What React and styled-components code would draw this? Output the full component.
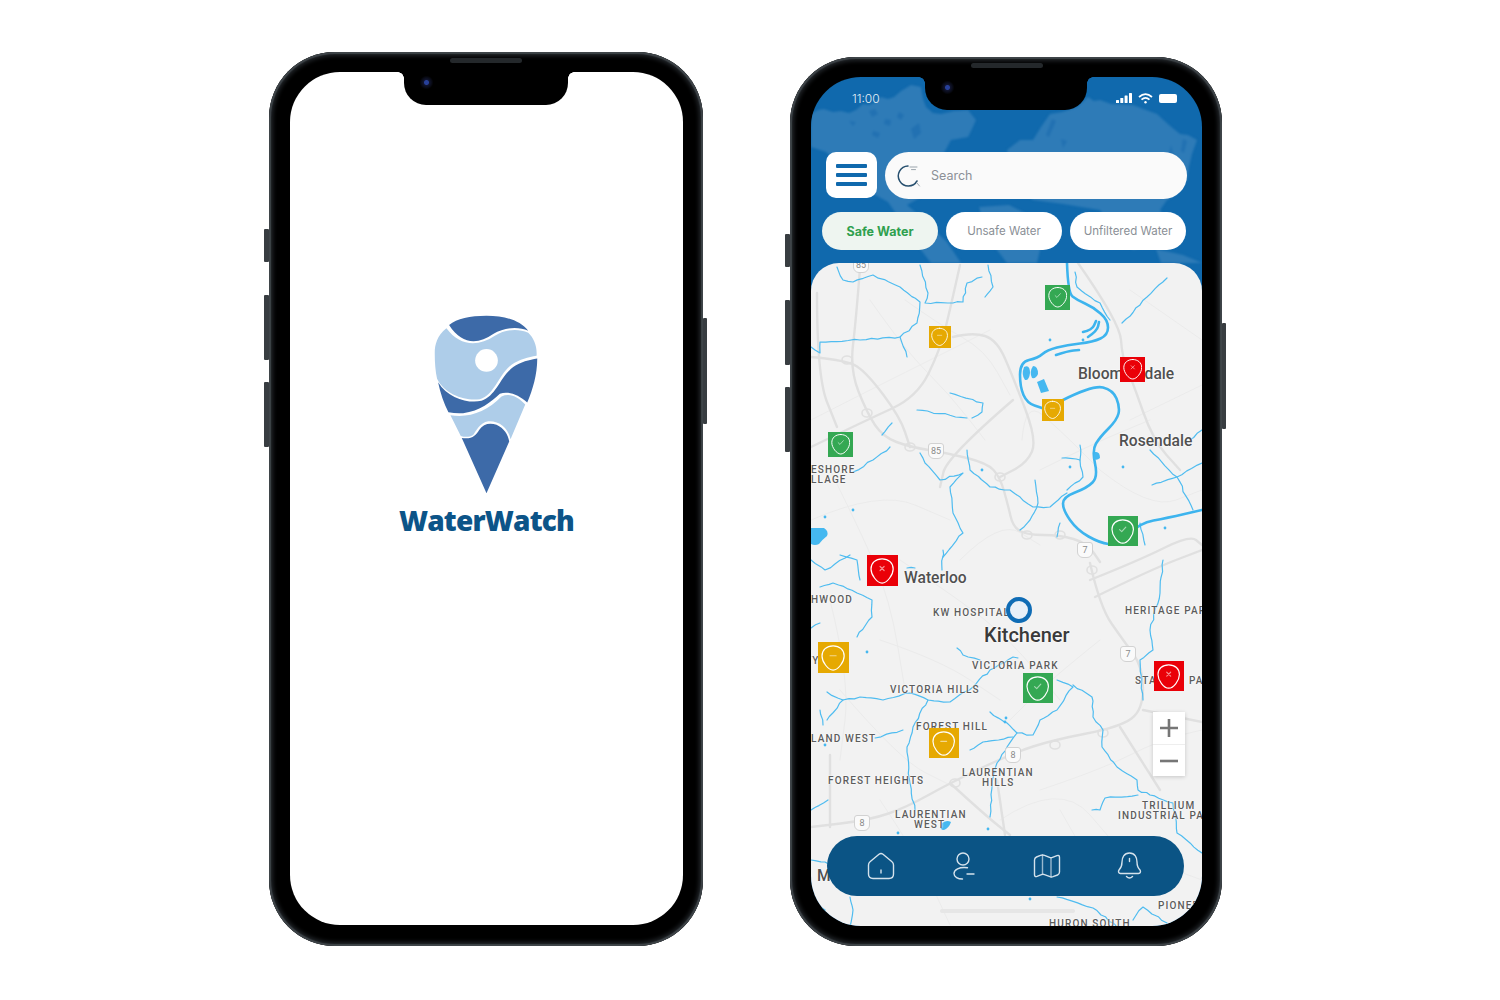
import React from 'react'
import styled, { createGlobalStyle } from 'styled-components'

const GlobalStyle = createGlobalStyle`
  html, body { margin: 0; padding: 0; background: #fff; }
  body { font-family: "Inter", "Liberation Sans", sans-serif; }
  * { box-sizing: border-box; }
`

// map data is in page pixels, the svg viewBox below maps it on to the panel
const MAP_X = 811
const MAP_Y = 263

const minorRoads = [
  '811,420 860,395 920,365 990,330',
  '870,300 905,350 950,395 985,440',
  '905,300 940,325 985,350 1010,395',
  '1022,440 1025,400 1060,430 1100,470',
  '1130,290 1202,340',
  '1130,420 1202,385',
  '1040,470 1090,445 1150,420',
  '1100,470 1150,510 1202,490',
  '830,470 860,530 890,600 905,690',
  '811,520 880,490 950,520',
  '900,560 960,600 1010,640 1060,700',
  '960,560 1000,520 1040,545',
  '880,640 940,660 1000,700',
  '830,600 850,680 840,760',
  '1100,640 1050,680 1010,720',
  '1040,790 1100,770 1160,740 1202,730',
  '1000,820 1060,780 1120,850',
  '1060,810 1100,880',
  '880,800 920,860 950,925',
  '1120,850 1202,880',
  '840,690 900,760 950,785',
]

const mainRoads = [
  '860,268 856,320 850,370 867,413 883,437 910,447 947,453 987,463 1000,477 1008,505 1013,527 1027,535 1060,535 1087,543 1100,562',
  '960,265 950,310 940,350 917,397 867,420 811,447',
  '811,357 847,360 867,373 900,417 910,447',
  '953,337 973,332 997,340 1013,377 1037,440 1027,463 1000,477',
  '1013,400 947,457 940,487',
  '1078,263 1120,323 1122,357 1133,383 1153,440 1180,470',
  '817,293 817,377 837,427',
  '1090,563 1100,607 1123,640 1143,667 1143,710 1120,727 1053,740 1013,753 950,783 907,807 870,820 811,827',
  '1090,580 1140,560 1190,535 1202,545',
  '1095,597 1150,570 1202,550',
  '950,783 985,815 1010,835',
  '997,780 1005,835',
  '1143,710 1202,722',
  '830,755 830,827',
  '1120,727 1160,790',
]

const interchanges = [
  [847, 360], [910, 447], [1000, 477], [1027, 535], [1060, 535],
  [1055, 745], [955, 783], [1103, 733], [1092, 570], [867, 413],
]

const thinRivers = [
  '837,267 843,280 853,282 873,275 900,287 920,302 917,323 900,337 860,340 820,342 820,353 811,347',
  '920,265 928,293 925,303 953,303 963,302 967,283 982,277',
  '988,265 993,287 985,297',
  '900,337 907,357',
  '950,393 983,403 982,412 972,418',
  '917,410 967,418',
  '1167,278 1147,297 1122,323',
  '1075,272 1077,287 1100,303 1110,320',
  '967,450 970,470 990,487 1010,490 1033,507 1050,507 1067,493',
  '920,453 925,463 940,480 963,473 950,487 953,513 963,533 943,557',
  '853,472 873,460 890,447',
  '882,435 892,423',
  '1150,450 1177,477 1193,510',
  '1152,485 1177,477 1202,463',
  '1062,458 1080,460 1083,477 1067,490',
  '1080,445 1080,460',
  '1035,480 1038,503 1030,520 1020,530',
  '1060,523 1057,537',
  '1140,523 1145,545',
  '820,587 833,583 857,593 872,600 872,617 857,637',
  '811,628 820,623',
  '827,692 843,700 860,697 883,700 910,693 928,700 950,702 973,687 990,670 1013,657 1018,658',
  '843,700 827,720',
  '928,700 913,727 907,747 910,783 915,810',
  '957,648 963,655 980,660',
  '990,712 1007,723 1017,733 1033,735 1040,720 1057,710 1073,687 1057,680',
  '1073,685 1092,697 1093,717 1103,730 1102,747 1117,767 1137,780 1138,790 1150,795 1173,803 1177,833 1202,853',
  '875,738 903,730',
  '1017,733 1007,747 997,763 992,783 990,817',
  '1013,737 983,742 970,750',
  '1163,560 1160,593 1150,630 1153,650 1140,660 1143,700',
  '1092,810 1100,810 1105,798 1138,795',
  '850,897 853,910 850,927',
  '1057,897 1093,908 1117,927',
  '1133,920 1143,907 1167,923',
  '811,810 828,800',
  '811,860 825,862 840,870',
  '811,900 825,910 818,925',
  '943,550 942,570',
  '907,568 915,568',
  '840,555 857,560 860,580',
  '811,560 825,570 850,555',
  '1190,440 1202,430',
  '820,710 823,725',
]

const mainRivers = [
  '1067,263 1068,293 1077,300 1093,307 1108,320 1108,335 1093,342 1067,345 1047,350 1038,358 1020,362 1020,387 1027,403 1042,408',
  '1063,400 1093,385 1113,390 1120,407 1117,420 1100,437 1092,450 1098,477 1087,488 1063,497 1063,510 1077,530 1100,543 1117,545 1140,523 1167,518 1202,510',
  '1056,355 1068,351 1079,350',
  '1083,332 1092,330 1096,321',
  '1088,337 1097,331 1099,322',
]

const ponds = [
  'M1024 367 q6 -3 6 6 q-1 8 -5 7 q-4 -5 -1 -13z',
  'M1033 366 q5 0 5 8 q-2 5 -6 4 q-3 -6 1 -12z',
  'M1037 382 l7 -3 l5 12 l-8 2z',
  'M811 528 h13 q5 3 3 8 q-4 3 -8 8 q-4 2 -8 0z',
  'M941 824 q5 -5 10 -2 q-2 6 -7 8 q-5 0 -3 -6z',
  'M1095 452 q5 -1 5 6 q-3 3 -7 1z',
]

const waterDots = [
  [853, 510], [825, 517], [982, 470], [1070, 467], [1165, 528], [1123, 467],
  [867, 652], [1005, 722], [988, 829], [898, 833], [825, 745], [1030, 899],
  [1006, 718], [1083, 340], [1050, 340],
]

const shields = [
  { id: 'a', x: 861, y: 265, text: '85' },
  { id: 'b', x: 936, y: 451, text: '85' },
  { id: 'c', x: 1085, y: 550, text: '7' },
  { id: 'd', x: 1128, y: 654, text: '7' },
  { id: 'e', x: 1013, y: 755, text: '8' },
  { id: 'f', x: 862, y: 823, text: '8' },
]

const labels = [
  { text: 'ESHORE', x: 811, y: 469 },
  { text: 'LLAGE', x: 811, y: 479 },
  { text: 'Bloomingdale', x: 1078, y: 374, kind: 'town' },
  { text: 'Rosendale', x: 1119, y: 441, kind: 'town' },
  { text: 'Waterloo', x: 904, y: 578, kind: 'town' },
  { text: 'HWOOD', x: 811, y: 599 },
  { text: 'KW HOSPITAL', x: 933, y: 612 },
  { text: 'Kitchener', x: 984, y: 635, kind: 'city' },
  { text: 'HERITAGE PARK', x: 1125, y: 610 },
  { text: 'VICTORIA PARK', x: 972, y: 665 },
  { text: 'VICTORIA HILLS', x: 890, y: 689 },
  { text: 'STA', x: 1135, y: 680 },
  { text: 'PA', x: 1189, y: 680 },
  { text: 'TY', x: 805, y: 660 },
  { text: 'FOREST HILL', x: 916, y: 726 },
  { text: 'LAND WEST', x: 811, y: 738 },
  { text: 'FOREST HEIGHTS', x: 828, y: 780 },
  { text: 'LAURENTIAN', x: 962, y: 772 },
  { text: 'HILLS', x: 982, y: 782 },
  { text: 'LAURENTIAN', x: 895, y: 814 },
  { text: 'WEST', x: 914, y: 824 },
  { text: 'TRILLIUM', x: 1142, y: 805 },
  { text: 'INDUSTRIAL PARK', x: 1118, y: 815 },
  { text: 'M', x: 817, y: 876, kind: 'town' },
  { text: 'PIONEER', x: 1158, y: 905 },
  { text: 'HURON SOUTH', x: 1049, y: 923 },
]

const markers = [
  { id: 1, x: 1045, y: 285, size: 25, tone: 'safe' },
  { id: 2, x: 929, y: 326, size: 22, tone: 'unfiltered' },
  { id: 3, x: 1120, y: 357, size: 25, tone: 'unsafe' },
  { id: 4, x: 1042, y: 399, size: 22, tone: 'unfiltered' },
  { id: 5, x: 828, y: 432, size: 25, tone: 'safe' },
  { id: 6, x: 1108, y: 516, size: 30, tone: 'safe' },
  { id: 7, x: 867, y: 555, size: 31, tone: 'unsafe' },
  { id: 8, x: 818, y: 642, size: 31, tone: 'unfiltered' },
  { id: 9, x: 1023, y: 673, size: 30, tone: 'safe' },
  { id: 10, x: 929, y: 728, size: 30, tone: 'unfiltered' },
  { id: 11, x: 1154, y: 661, size: 30, tone: 'unsafe' },
]

const toneColors = { safe: '#34a853', unfiltered: '#e6a902', unsafe: '#ea0008' }

const parsePoints = (line) => line.split(' ').map((s) => s.split(',').map(Number))

// rounds a point list into a path through the midpoints
const smooth = (line) => {
  const p = parsePoints(line)
  let d = `M${p[0][0]} ${p[0][1]}`
  for (let i = 1; i < p.length - 1; i++) {
    const mx = (p[i][0] + p[i + 1][0]) / 2
    const my = (p[i][1] + p[i + 1][1]) / 2
    d += ` Q${p[i][0]} ${p[i][1]} ${mx} ${my}`
  }
  const last = p[p.length - 1]
  return d + ` L${last[0]} ${last[1]}`
}

const noise = (a) => {
  const s = Math.sin(a * 12.9898) * 43758.5453
  return (s - Math.floor(s) - 0.5) * 2
}

// streams are not straight: cut each leg up and push the points around a bit
const wiggle = (line, amp) => {
  const p = parsePoints(line)
  let d = `M${p[0][0]} ${p[0][1]}`
  for (let i = 1; i < p.length; i++) {
    const [x0, y0] = p[i - 1]
    const [x1, y1] = p[i]
    const n = Math.max(1, Math.ceil(Math.hypot(x1 - x0, y1 - y0) / 6))
    for (let j = 1; j <= n; j++) {
      const t = j / n
      const x = x0 + (x1 - x0) * t
      const y = y0 + (y1 - y0) * t
      const off = j === n ? 0 : amp
      d += ` L${(x + noise(x + y * 0.3) * off).toFixed(1)} ${(y + noise(y + x * 0.7) * off).toFixed(1)}`
    }
  }
  return d
}

const Stage = styled.div`
  display: flex;
  align-items: flex-start;
  gap: 87px;
  width: 1500px;
  height: 1000px;
  padding-left: 269px;
  background: #fff;
  overflow: hidden;
`

const Phone = styled.div`
  position: relative;
  flex: none;
  width: ${(p) => p.$w}px;
  height: ${(p) => p.$h}px;
  margin-top: ${(p) => p.$top}px;
  padding: 20px 20px ${(p) => p.$bottom}px 21px;
  border-radius: 66px;
  background: #000;
  box-shadow: inset 0 0 1px 2px #3f4549, inset 0 0 4px 4px #22262a;
`

const SideKey = styled.span`
  position: absolute;
  top: ${(p) => p.$top}px;
  ${(p) => (p.$right ? 'right: -4px;' : 'left: -5px;')}
  width: ${(p) => (p.$right ? 4 : 5)}px;
  height: ${(p) => p.$h}px;
  border-radius: 1px;
  background: #383d41;
`

const Notch = styled.div`
  position: absolute;
  top: 20px;
  left: 135px;
  width: ${(p) => p.$w}px;
  height: 33px;
  border-radius: 0 0 22px 22px;
  background: #000;
  z-index: 5;
  &::before, &::after {
    content: "";
    position: absolute;
    top: 0;
    width: 6px;
    height: 6px;
  }
  &::before {
    left: -6px;
    background: radial-gradient(circle at 0 100%, transparent 5.5px, #000 6px);
  }
  &::after {
    right: -6px;
    background: radial-gradient(circle at 100% 100%, transparent 5.5px, #000 6px);
  }
`

const Speaker = styled.span`
  position: absolute;
  top: 6px;
  left: 181px;
  width: 72px;
  height: 5px;
  border-radius: 3px;
  background: #24282b;
  z-index: 6;
`

const Camera = styled.span`
  position: absolute;
  top: 24px;
  left: 151px;
  width: 13px;
  height: 13px;
  border-radius: 50%;
  background: radial-gradient(circle, #27409a 0 2px, #10142e 3px, #05060c 6px);
  z-index: 6;
`

const SplashScreen = styled.div`
  display: flex;
  flex-direction: column;
  align-items: center;
  width: 100%;
  height: 100%;
  padding-top: 241px;
  border-radius: 50px;
  background: #fff;
`

const LogoMark = styled.svg`
  display: block;
  width: 107px;
  height: 182px;
`

const LogoText = styled.div`
  margin-top: 6px;
  font-family: "Open Sans", sans-serif;
  font-size: 28px;
  font-weight: 800;
  line-height: 38px;
  letter-spacing: -0.8px;
  color: #0c5488;
`

const AppScreen = styled.div`
  position: relative;
  display: flex;
  flex-direction: column;
  width: 100%;
  height: 100%;
  border-radius: 50px;
  background: #1069ad;
  overflow: hidden;
`

const HeaderArt = styled.svg`
  position: absolute;
  top: 0;
  left: 0;
  width: 391px;
  height: 200px;
  filter: blur(0.8px);
`

const StatusBar = styled.div`
  position: relative;
  display: flex;
  align-items: center;
  justify-content: space-between;
  height: 44px;
  padding: 0 25px 2px 41px;
  margin-bottom: 31px;
  color: #fff;
`

const Time = styled.span`
  font-family: "Inter", sans-serif;
  font-size: 12px;
  font-weight: 300;
  color: #e4eef6;
`

const StatusIcons = styled.div`
  display: flex;
  align-items: center;
  gap: 6px;
`

const SearchRow = styled.div`
  position: relative;
  display: flex;
  align-items: flex-start;
  gap: 8px;
  padding-left: 15px;
`

const MenuButton = styled.button`
  display: flex;
  flex-direction: column;
  justify-content: center;
  gap: 5px;
  width: 51px;
  height: 46px;
  padding: 0 10px;
  border: none;
  border-radius: 10px;
  background: #fff;
`

const MenuBar = styled.span`
  display: block;
  height: 4px;
  border-radius: 1px;
  background: #1069ad;
`

const SearchBox = styled.div`
  display: flex;
  align-items: center;
  gap: 10px;
  width: 302px;
  height: 47px;
  padding-left: 12px;
  border-radius: 24px;
  background: #fafafa;
  font-family: "Inter", sans-serif;
  font-size: 12.5px;
  color: #8c9097;
`

const ChipRow = styled.div`
  position: relative;
  display: flex;
  gap: 8px;
  padding-left: 11px;
  margin: 13px 0;
`

const Chip = styled.div`
  display: flex;
  align-items: center;
  justify-content: center;
  width: 116px;
  height: 38px;
  border-radius: 19px;
  background: ${(p) => (p.$active ? '#eef5f0' : '#fff')};
  color: ${(p) => (p.$active ? '#2fa04e' : '#8a8f96')};
  font-family: "Inter", sans-serif;
  font-size: ${(p) => (p.$active ? '12.5px' : '11.5px')};
  font-weight: ${(p) => (p.$active ? 700 : 400)};
  white-space: nowrap;
`

const MapPanel = styled.div`
  position: relative;
  flex: 1;
  border-radius: 28px 28px 0 0;
  background: #f2f2f2;
  overflow: hidden;
`

const MapArt = styled.svg`
  position: absolute;
  inset: 0;
  width: 100%;
  height: 100%;
`

const PlaceLabel = styled.span`
  position: absolute;
  left: ${(p) => p.$x - MAP_X}px;
  top: ${(p) => p.$y - MAP_Y}px;
  transform: translateY(-50%);
  font-family: "Roboto", sans-serif;
  white-space: nowrap;
  text-shadow: 0 0 2px #fff, 0 0 2px #fff;
  ${(p) =>
    p.$kind === 'city'
      ? 'font-size: 20px; font-weight: 500; color: #3a3a3a;'
      : p.$kind === 'town'
        ? 'font-size: 15.6px; font-weight: 500; color: #505050;'
        : 'font-size: 10px; font-weight: 500; letter-spacing: 1.15px; color: #5c5c5c;'}
`

const RoadShield = styled.span`
  position: absolute;
  left: ${(p) => p.$x - MAP_X - 8}px;
  top: ${(p) => p.$y - MAP_Y - 8}px;
  display: flex;
  align-items: center;
  justify-content: center;
  width: 16px;
  height: 16px;
  border: 1.5px solid #d2d2d2;
  border-radius: 3px 3px 6px 6px;
  background: #fafafa;
  font-family: "Roboto", sans-serif;
  font-size: 9px;
  color: #8a8a8a;
`

const Pin = styled.div`
  position: absolute;
  left: ${(p) => p.$x - MAP_X}px;
  top: ${(p) => p.$y - MAP_Y}px;
  display: flex;
  align-items: center;
  justify-content: center;
  width: ${(p) => p.$size}px;
  height: ${(p) => p.$size}px;
  background: ${(p) => toneColors[p.$tone]};
`

const PinGlyph = styled.svg`
  display: block;
  width: 78%;
  height: 90%;
`

const LocationDot = styled.span`
  position: absolute;
  left: ${1006 - MAP_X}px;
  top: ${597 - MAP_Y}px;
  width: 26px;
  height: 26px;
  border: 4px solid #0f6cb5;
  border-radius: 50%;
  background: #e8f0f8;
`

const ZoomControl = styled.div`
  position: absolute;
  left: ${1153 - MAP_X}px;
  top: ${712 - MAP_Y}px;
  display: flex;
  flex-direction: column;
  width: 32px;
  box-shadow: 0 1px 4px rgba(0, 0, 0, 0.18);
`

const ZoomButton = styled.div`
  display: flex;
  align-items: center;
  justify-content: center;
  height: 32px;
  background: #fff;
  & + & { border-top: 1px solid #eee; }
`

const HomeBar = styled.span`
  position: absolute;
  left: ${940 - MAP_X}px;
  top: ${909 - MAP_Y}px;
  width: 135px;
  height: 4px;
  border-radius: 2px;
  background: #e6e6e6;
`

const BottomNav = styled.nav`
  position: absolute;
  left: 16px;
  bottom: 30px;
  display: grid;
  grid-template-columns: repeat(4, 83px);
  align-items: center;
  justify-items: center;
  width: 357px;
  height: 60px;
  padding-left: 12px;
  border-radius: 30px;
  background: #0b5485;
`

const NavIcon = styled.svg`
  display: block;
  fill: none;
  stroke: #d5e2ec;
  stroke-width: 1.4;
  stroke-linecap: round;
  stroke-linejoin: round;
`

const Signal = () => (
  <svg width="16" height="10" viewBox="0 0 16 10" fill="#fff">
    <rect x="0" y="7" width="3" height="3" rx="0.6" />
    <rect x="4.3" y="5" width="3" height="5" rx="0.6" />
    <rect x="8.6" y="2.5" width="3" height="7.5" rx="0.6" />
    <rect x="13" y="0" width="3" height="10" rx="0.6" />
  </svg>
)

const Wifi = () => (
  <svg width="15" height="11" viewBox="0 0 15 11" fill="none" stroke="#fff" strokeWidth="1.7">
    <path d="M1 4 Q7.5 -1.6 14 4" />
    <path d="M3.5 6.6 Q7.5 3 11.5 6.6" />
    <circle cx="7.5" cy="9.3" r="1.2" fill="#fff" stroke="none" />
  </svg>
)

const Battery = () => (
  <svg width="18" height="9" viewBox="0 0 18 9">
    <rect x="0" y="0" width="18" height="9" rx="2" fill="#fff" />
  </svg>
)

const SearchGlyph = () => (
  <svg width="24" height="24" viewBox="0 0 24 24" fill="none" stroke="#27506f" strokeWidth="1.5" strokeLinecap="round">
    <path d="M11 2 A10 10 0 1 0 20 17" />
    <path d="M13 3 H20 M14.5 5.6 H18.5" stroke="#9aa4ac" strokeWidth="1" />
    <path d="M20 19 L22.5 22" stroke="#9aa4ac" strokeWidth="1" />
  </svg>
)

const Logo = () => (
  <LogoMark viewBox="160 40 320 545">
    <path fill="#3d6aa8" d="M208 76 C245 135 295 135 340 103 C375 82 415 80 445 93 C420 62 375 48 320 48 C270 48 232 56 208 76 Z" />
    <path fill="#aecde9" d="M200 86 C172 108 165 135 165 160 C165 190 167 215 172 237 C195 285 260 305 300 298 C345 285 355 225 395 195 C420 178 445 172 470 168 C472 140 462 115 445 99 C415 86 378 88 345 108 C295 142 240 140 200 86 Z" />
    <path fill="#3d6aa8" d="M175 247 C205 295 265 312 305 303 C350 288 360 232 400 202 C422 186 448 180 472 176 C472 225 458 270 442 308 C415 285 385 272 360 282 C335 305 300 335 250 340 C235 341 220 340 206 337 C192 310 182 280 175 247 Z" />
    <path fill="#aecde9" d="M212 346 C270 355 320 335 365 290 C390 278 415 292 436 314 L392 418 C385 385 360 362 325 364 C300 368 288 395 280 405 C270 412 255 412 243 408 Z" />
    <path fill="#3d6aa8" d="M246 414 C275 420 290 405 298 390 C310 372 330 368 350 375 C372 385 385 405 388 425 L320 580 Z" />
    <circle cx="320" cy="182" r="34" fill="#fff" />
  </LogoMark>
)

const WorldMap = () => (
  <HeaderArt viewBox="0 0 391 200">
    <g fill="#2e7bb7">
      <path d="M0 37 L7 33 L13 32 L22 35 L30 34 L38 36 L45 33 L52 27 L58 28 L63 26 L70 20 L77 22 L83 20 L90 14 L100 8 L110 10 L112 22 L115 30 L122 36 L130 37 L143 34 L157 33 L165 43 L161 52 L157 60 L140 63 L128 85 L118 100 L110 120 L96 128 L110 140 L122 152 L136 165 L150 186 L120 186 L100 160 L84 135 L77 125 L50 110 L30 88 L15 75 L0 70 Z" />
      <path d="M277 20 L283 24 L289 23 L300 27 L322 28 L335 33 L346 37 L358 48 L369 57 L377 58 L386 63 L381 77 L378 90 L376 103 L366 117 L356 123 L349 133 L359 147 L346 167 L322 173 L300 150 L289 133 L270 130 L252 127 L222 123 L205 110 L196 73 L209 63 L222 63 L230 50 L239 37 L251 35 L266 30 Z" />
      <path d="M168 130 L198 128 L222 140 L232 160 L226 186 L196 186 L176 160 Z" />
      <path d="M345 172 L372 178 L391 186 L350 186 Z" />
    </g>
    <g fill="#2271b2">
      <path d="M58 34 l6 -2 l3 5 l-6 3z" />
      <path d="M74 42 l6 1 l-1 6 l-6 -2z" />
      <path d="M88 35 l5 3 l-3 5 l-4 -3z" />
      <path d="M62 54 l7 2 l-2 5 l-6 -3z" />
      <path d="M38 44 l7 1 l-3 4z" />
      <path d="M100 52 l8 -6 l2 10 l-7 6z" />
      <path d="M241 42 l4 2 l-7 16 l-3 -2z" />
      <path d="M372 62 l4 2 l-3 12 l-3 -2z" />
      <path d="M250 62 l6 2 l-4 7z" />
      <path d="M360 68 l5 20 l-6 12 l-5 -8z" />
    </g>
  </HeaderArt>
)

const CrossMark = () => <path d="M10 8.6 L14 12.6 M14 8.6 L10 12.6" />
const DashMark = () => <path d="M9 10.8 H15" />
const CheckMark = () => <path d="M8.8 11 L11 13.2 L15.2 8.6" />

const PinMark = ({ tone }) => (
  <PinGlyph viewBox="0 0 24 26" fill="none" stroke="#fff" strokeLinecap="round" strokeLinejoin="round">
    <path strokeWidth="1.2" d="M12 1 C18.5 1 23 5 23 11 C23 17 17 25 12 25 C7 25 1 17 1 11 C1 5 5.5 1 12 1 Z" />
    <g strokeWidth="1.2" strokeOpacity="0.55">
      {tone === 'safe' && <CheckMark />}
      {tone === 'unsafe' && <CrossMark />}
      {tone === 'unfiltered' && <DashMark />}
    </g>
  </PinGlyph>
)

const CityMap = () => (
  <MapArt viewBox={`${MAP_X} ${MAP_Y} 391 663`} preserveAspectRatio="none" fill="none" strokeLinecap="round" strokeLinejoin="round">
    {minorRoads.map((line) => (
      <path key={line} d={smooth(line)} stroke="#ebebeb" strokeWidth="1" />
    ))}
    {mainRoads.map((line) => (
      <path key={line} d={smooth(line)} stroke="#e0e0e0" strokeWidth="2.4" />
    ))}
    {interchanges.map(([x, y]) => (
      <ellipse key={`${x}${y}`} cx={x} cy={y} rx="5" ry="4" stroke="#e0e0e0" strokeWidth="1.6" />
    ))}
    {thinRivers.map((line) => (
      <path key={line} d={wiggle(line, 0.9)} stroke="#4fbcf0" strokeWidth="1.2" />
    ))}
    {mainRivers.map((line) => (
      <path key={line} d={smooth(line)} stroke="#3db4ee" strokeWidth="2.6" />
    ))}
    <g fill="#45b8f0">
      {ponds.map((d) => (
        <path key={d} d={d} />
      ))}
      {waterDots.map(([x, y]) => (
        <circle key={`${x}${y}`} cx={x} cy={y} r="1.4" />
      ))}
    </g>
  </MapArt>
)

const WaterMapScreen = () => (
  <AppScreen>
    <WorldMap />
    <StatusBar>
      <Time>11:00</Time>
      <StatusIcons>
        <Signal />
        <Wifi />
        <Battery />
      </StatusIcons>
    </StatusBar>
    <SearchRow>
      <MenuButton aria-label="Menu">
        <MenuBar />
        <MenuBar />
        <MenuBar />
      </MenuButton>
      <SearchBox>
        <SearchGlyph />
        Search
      </SearchBox>
    </SearchRow>
    <ChipRow>
      <Chip $active>Safe Water</Chip>
      <Chip>Unsafe Water</Chip>
      <Chip>Unfiltered Water</Chip>
    </ChipRow>
    <MapPanel>
      <CityMap />
      {shields.map((s) => (
        <RoadShield key={s.id} $x={s.x} $y={s.y}>{s.text}</RoadShield>
      ))}
      {labels.map((l) => (
        <PlaceLabel key={`${l.text}${l.x}`} $x={l.x} $y={l.y} $kind={l.kind}>{l.text}</PlaceLabel>
      ))}
      <LocationDot />
      {markers.map((m) => (
        <Pin key={m.id} $x={m.x} $y={m.y} $size={m.size} $tone={m.tone}>
          <PinMark tone={m.tone} />
        </Pin>
      ))}
      <ZoomControl>
        <ZoomButton>
          <svg width="18" height="18" viewBox="0 0 18 18" stroke="#767676" strokeWidth="2.6">
            <path d="M9 0 V18 M0 9 H18" />
          </svg>
        </ZoomButton>
        <ZoomButton>
          <svg width="18" height="18" viewBox="0 0 18 18" stroke="#767676" strokeWidth="2.6">
            <path d="M0 9 H18" />
          </svg>
        </ZoomButton>
      </ZoomControl>
      <HomeBar />
      <BottomNav>
        <NavIcon width="28" height="28" viewBox="0 0 28 28">
          <path d="M1.5 13 Q1.5 11 3 9.8 L12 2.2 Q14 .8 16 2.2 L25 9.8 Q26.5 11 26.5 13 V22 Q26.5 26.5 22 26.5 H6 Q1.5 26.5 1.5 22 Z" />
          <path d="M14 18 V21" />
        </NavIcon>
        <NavIcon width="22" height="28" viewBox="0 0 22 28">
          <circle cx="10" cy="7" r="6" />
          <path d="M14.5 15.7 C6 14.5 1 18 1 21.5 C1 25 5 27 9.5 27" />
          <path d="M14 22 H21" />
        </NavIcon>
        <NavIcon width="28" height="24" viewBox="0 0 28 24">
          <path d="M1.5 6 Q1.5 4 3.5 3 L7.5 1.4 Q9.5 .6 11.5 1.4 L16.5 3.4 Q18 4 19.5 3.4 L24 1.6 Q26.5 .8 26.5 3.5 V18 Q26.5 20 24.5 21 L20 22.7 Q18.5 23.2 17 22.7 L11.5 20.6 Q10 20 8.5 20.6 L4 22.4 Q1.5 23.2 1.5 20.5 Z" />
          <path d="M9.5 1 V20 M18 4 V23" strokeOpacity="0.7" />
        </NavIcon>
        <NavIcon width="25" height="28" viewBox="0 0 25 28">
          <path d="M12.5 1 C7 1 5 5.5 5 10 C5 14 4 16 2 18 C1 19.5 1.5 21.5 3.5 21.5 H21.5 C23.5 21.5 24 19.5 23 18 C21 16 20 14 20 10 C20 5.5 18 1 12.5 1 Z" />
          <path d="M9.5 24.5 Q12.5 27.5 15.5 24.5" />
          <path d="M12.5 6.5 V9.5" />
        </NavIcon>
      </BottomNav>
    </MapPanel>
  </AppScreen>
)

const PhoneChrome = ({ notch }) => (
  <>
    <SideKey $top={177} $h={33} />
    <SideKey $top={243} $h={65} />
    <SideKey $top={330} $h={65} />
    <SideKey $right $top={266} $h={106} />
    <Notch $w={notch} />
    <Speaker />
    <Camera />
  </>
)

const App = () => (
  <Stage>
    <GlobalStyle />
    <Phone $w={434} $h={894} $top={52} $bottom={21}>
      <PhoneChrome notch={164} />
      <SplashScreen>
        <Logo />
        <LogoText>WaterWatch</LogoText>
      </SplashScreen>
    </Phone>
    <Phone $w={432} $h={889} $top={57} $bottom={20}>
      <PhoneChrome notch={162} />
      <WaterMapScreen />
    </Phone>
  </Stage>
)

export default App
